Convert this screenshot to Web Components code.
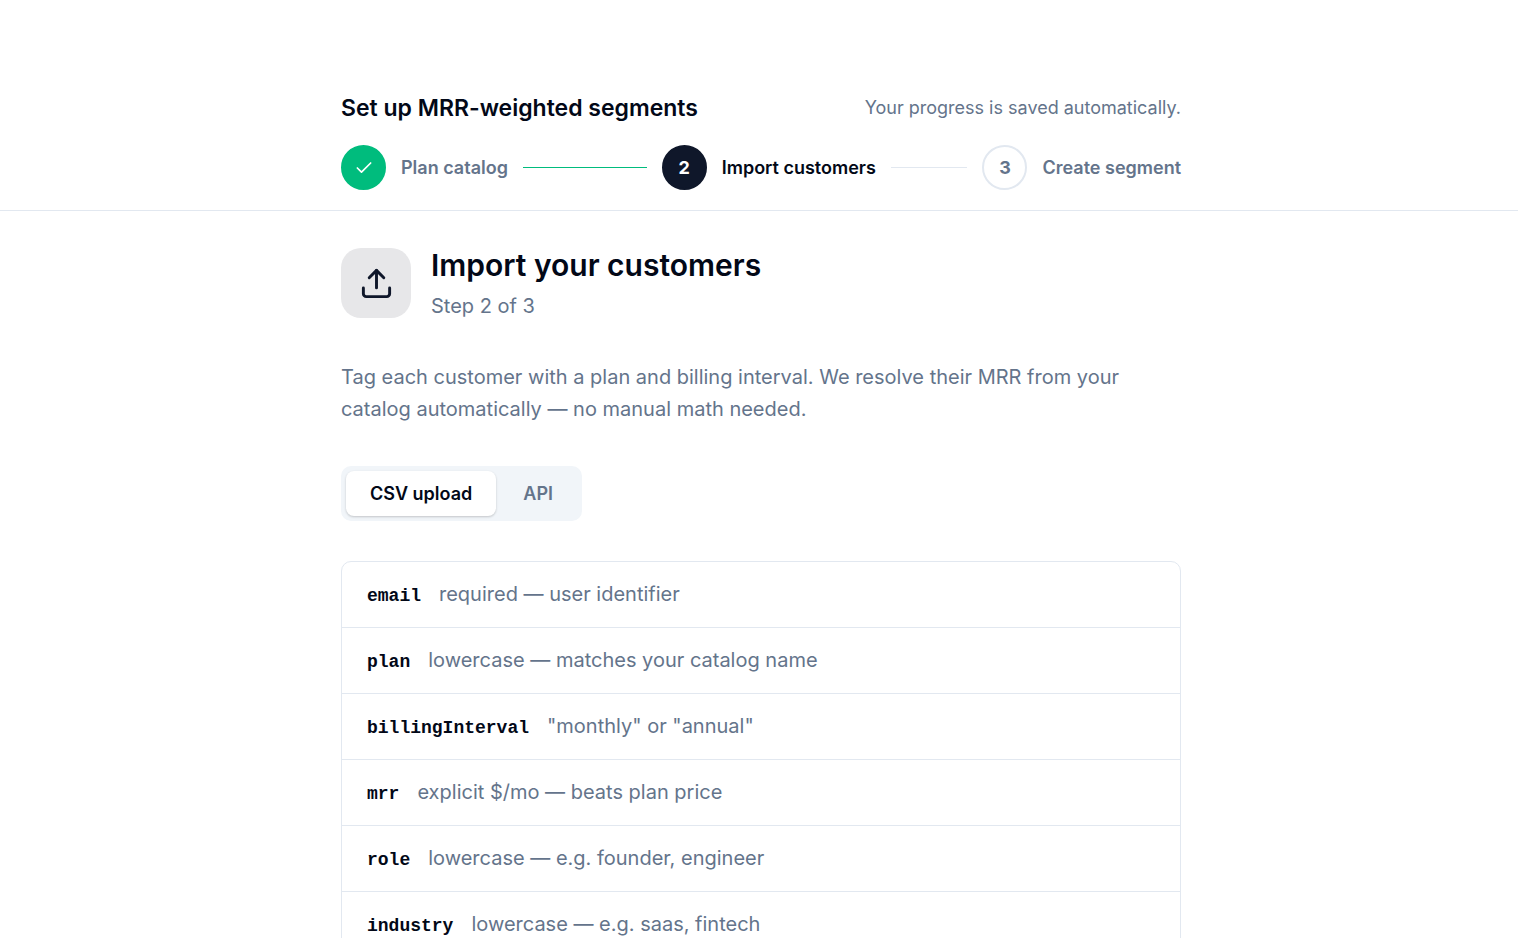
<!DOCTYPE html>
<html lang="en">
<head>
<meta charset="utf-8">
<meta name="viewport" content="width=device-width, initial-scale=1">
<title>Set up MRR-weighted segments</title>
<style>
  :root {
    --fg: #020817;
    --muted: #64748b;
    --line: #e2e8f0;
    --soft: #f1f5f9;
    --primary: #0f172a;
    --done: #00bc7d;
    --small: 18px;
  }
  body { margin: 0; background: #fff; color: var(--fg); font: 400 20px/30px Inter, "Liberation Sans", sans-serif; }
</style>
</head>
<body>
<setup-page></setup-page>

<template id="t-page">
  <style>
    :host { display: block; }
    .inner { max-width: 840px; margin: 0 auto; }
    header, main { padding: 0 20px 0 24px; }
    header { padding-top: 90px; padding-bottom: 20px; border-bottom: 1px solid var(--line); }
    .top { display: flex; justify-content: space-between; align-items: center; margin-bottom: 19px; }
    h1 { margin: 0; font-size: 23px; line-height: 36px; font-weight: 600; }
    .top p { margin: 0; font-size: var(--small); line-height: 24px; color: var(--muted); }
    main { padding-top: 36px; padding-bottom: 40px; }
    .lead { margin: 42px 0 41px; line-height: 32px; color: var(--muted); }
    field-list { margin-top: 40px; }
  </style>
  <header>
    <div class="inner">
      <div class="top">
        <h1>Set up MRR-weighted segments</h1>
        <p>Your progress is saved automatically.</p>
      </div>
      <step-bar>
        <step-item state="done" number="1">Plan catalog</step-item>
        <step-item state="current" number="2">Import customers</step-item>
        <step-item state="next" number="3" last>Create segment</step-item>
      </step-bar>
    </div>
  </header>
  <main>
    <div class="inner">
      <page-heading>
        Import your customers
        <span slot="sub">Step 2 of 3</span>
      </page-heading>
      <p class="lead">Tag each customer with a plan and billing interval. We resolve their MRR from your catalog automatically — no manual math needed.</p>
      <tab-switch></tab-switch>
      <field-list></field-list>
    </div>
  </main>
</template>

<template id="t-bar">
  <style>
    :host { display: flex; gap: 15px; }
  </style>
  <slot></slot>
</template>

<template id="t-step">
  <style>
    :host { display: flex; flex: 1 1 0; align-items: center; gap: 15px; font-size: var(--small); line-height: 25px; font-weight: 600; color: var(--muted); white-space: nowrap; }
    :host([last]) { flex: none; }
    :host([state="current"]) { color: var(--fg); }
    .dot { box-sizing: border-box; flex: none; width: 45px; height: 45px; border-radius: 50%; display: grid; place-items: center; border: 2px solid var(--line); font-weight: 700; }
    :host([state="done"]) .dot { background: var(--done); border-color: var(--done); color: #fff; }
    :host([state="current"]) .dot { background: var(--primary); border-color: var(--primary); color: #fff; }
    .rule { flex: 1; height: 1px; background: var(--line); }
    :host([state="done"]) .rule { background: var(--done); }
    :host([last]) .rule { display: none; }
    svg { display: block; }
  </style>
  <span class="dot"></span>
  <span><slot></slot></span>
  <span class="rule"></span>
</template>

<template id="t-heading">
  <style>
    :host { display: flex; align-items: center; gap: 20px; }
    .tile { flex: none; width: 70px; height: 70px; border-radius: 20px; background: #e7e7e9; color: var(--primary); display: grid; place-items: center; }
    h2 { margin: 0; font-size: 30px; line-height: 36px; font-weight: 600; }
    p { margin: 10px 0 0; line-height: 26px; color: var(--muted); }
  </style>
  <div class="tile">
    <svg width="35" height="35" viewBox="0 0 24 24" fill="none" stroke="currentColor" stroke-width="2" stroke-linecap="round" stroke-linejoin="round" aria-hidden="true"><path d="M12 3v12"/><path d="m17 8-5-5-5 5"/><path d="M21 15v4a2 2 0 0 1-2 2H5a2 2 0 0 1-2-2v-4"/></svg>
  </div>
  <div>
    <h2><slot></slot></h2>
    <p><slot name="sub"></slot></p>
  </div>
</template>

<template id="t-tabs">
  <style>
    :host { display: flex; }
    div { display: flex; gap: 3px; padding: 5px; border-radius: 10px; background: var(--soft); }
    button { margin: 0; border: 0; padding: 10px 24px; border-radius: 8px; background: none; font: inherit; font-size: var(--small); line-height: 25px; font-weight: 600; color: var(--muted); cursor: pointer; }
    button[aria-selected="true"] { background: #fff; color: var(--fg); box-shadow: 0 1px 3px rgba(0, 0, 0, .1), 0 1px 2px rgba(0, 0, 0, .1); }
  </style>
  <div role="tablist" aria-label="Import method">
    <button type="button" role="tab" aria-selected="true">CSV upload</button>
    <button type="button" role="tab" aria-selected="false">API</button>
  </div>
</template>

<template id="t-fields">
  <style>
    :host { display: block; }
    dl { margin: 0; border: 1px solid var(--line); border-radius: 10px; }
    .row { display: flex; align-items: baseline; gap: 18px; padding: 17px 25px 18px; }
    .row + .row { border-top: 1px solid var(--line); }
    dt { font: 700 var(--small)/25px "Liberation Mono", monospace; }
    dd { margin: 0; color: var(--muted); }
  </style>
  <dl></dl>
</template>

<script>
  const stamp = (host, id) => {
    const root = host.attachShadow({ mode: "open" });
    root.append(document.getElementById(id).content.cloneNode(true));
    return root;
  };

  customElements.define("step-bar", class extends HTMLElement {
    constructor() { super(); stamp(this, "t-bar"); }
    connectedCallback() { this.setAttribute("role", "group"); this.setAttribute("aria-label", "Progress"); }
  });

  customElements.define("step-item", class extends HTMLElement {
    constructor() { super(); stamp(this, "t-step"); }
    connectedCallback() {
      const dot = this.shadowRoot.querySelector(".dot");
      if (this.getAttribute("state") === "done") {
        dot.innerHTML = '<svg width="20" height="20" viewBox="0 0 24 24" fill="none" stroke="currentColor" stroke-width="2" stroke-linecap="round" stroke-linejoin="round" aria-hidden="true"><path d="M20 6 9 17l-5-5"/></svg>';
      } else {
        dot.textContent = this.getAttribute("number");
      }
    }
  });

  customElements.define("page-heading", class extends HTMLElement {
    constructor() { super(); stamp(this, "t-heading"); }
  });

  customElements.define("tab-switch", class extends HTMLElement {
    constructor() {
      super();
      const tabs = stamp(this, "t-tabs").querySelectorAll("button");
      tabs.forEach(tab => tab.addEventListener("click", () =>
        tabs.forEach(t => t.setAttribute("aria-selected", String(t === tab)))));
    }
  });

  customElements.define("field-list", class extends HTMLElement {
    constructor() {
      super();
      const list = stamp(this, "t-fields").querySelector("dl");
      const fields = [
        ["email", "required — user identifier"],
        ["plan", "lowercase — matches your catalog name"],
        ["billingInterval", "\"monthly\" or \"annual\""],
        ["mrr", "explicit $/mo — beats plan price"],
        ["role", "lowercase — e.g. founder, engineer"],
        ["industry", "lowercase — e.g. saas, fintech"]
      ];
      for (const [name, text] of fields) {
        const row = document.createElement("div");
        row.className = "row";
        const dt = document.createElement("dt");
        const dd = document.createElement("dd");
        dt.textContent = name;
        dd.textContent = text;
        row.append(dt, dd);
        list.append(row);
      }
    }
  });

  customElements.define("setup-page", class extends HTMLElement {
    constructor() { super(); stamp(this, "t-page"); }
  });
</script>
</body>
</html>
